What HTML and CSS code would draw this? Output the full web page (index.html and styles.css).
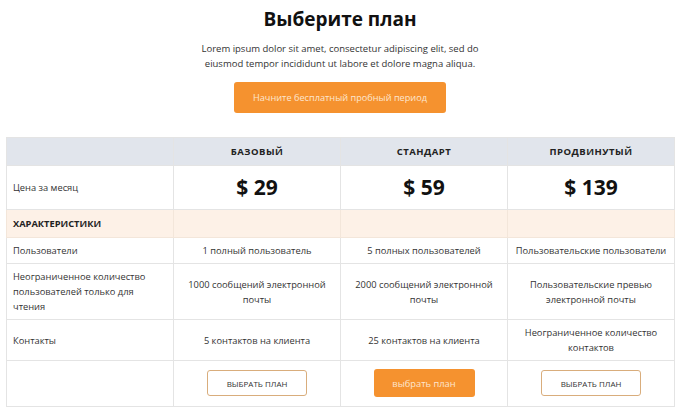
FILE: index.html
```html
<!DOCTYPE html>
<html lang="ru">
<head>
<meta charset="utf-8">
<title>Выберите план</title>
<link rel="stylesheet" href="styles.css">
</head>
<body>
<div class="page">
  <header class="intro">
    <h1 class="title">Выберите план</h1>
    <p class="lead">Lorem ipsum dolor sit amet, consectetur adipiscing elit, sed do<br>eiusmod tempor incididunt ut labore et dolore magna aliqua.</p>
    <a class="cta" href="#">Начните бесплатный пробный период</a>
  </header>
  <table class="plans">
    <colgroup><col class="c"><col class="c"><col class="c"><col class="c"></colgroup>
    <tr class="head">
      <th></th><th>Базовый</th><th>Стандарт</th><th>Продвинутый</th>
    </tr>
    <tr class="price">
      <td class="label">Цена за месяц</td><td>$ 29</td><td>$ 59</td><td>$ 139</td>
    </tr>
    <tr class="section">
      <td class="label">ХАРАКТЕРИСТИКИ</td><td></td><td></td><td></td>
    </tr>
    <tr>
      <td class="label">Пользователи</td><td>1 полный пользователь</td><td>5 полных пользователей</td><td>Пользовательские пользователи</td>
    </tr>
    <tr>
      <td class="label">Неограниченное количество пользователей только для чтения</td><td>1000 сообщений электронной почты</td><td>2000 сообщений электронной почты</td><td>Пользовательские превью электронной почты</td>
    </tr>
    <tr>
      <td class="label">Контакты</td><td>5 контактов на клиента</td><td>25 контактов на клиента</td><td>Неограниченное количество контактов</td>
    </tr>
    <tr class="actions">
      <td></td>
      <td><a class="btn btn-outline" href="#">ВЫБРАТЬ ПЛАН</a></td>
      <td><a class="btn btn-fill" href="#">выбрать план</a></td>
      <td><a class="btn btn-outline" href="#">ВЫБРАТЬ ПЛАН</a></td>
    </tr>
  </table>
</div>
</body>
</html>
```
FILE: styles.css
```css
* { box-sizing: border-box; }
html, body { margin: 0; padding: 0; background: #fff; }
body {
  font-family: "Open Sans", "Liberation Sans", sans-serif;
  color: #333;
}
.page {
  width: 680px;
  padding: 6px 6px 0;
}
.intro {
  display: flex;
  flex-direction: column;
  align-items: center;
}
.title {
  margin: 0;
  font-size: 19px;
  line-height: 26px;
  font-weight: 700;
  color: #111;
}
.lead {
  margin: 9px 0 0;
  font-size: 9.5px;
  line-height: 15px;
  text-align: center;
  color: #333;
}
.cta {
  margin-top: 11px;
  width: 212px;
  height: 31px;
  display: flex;
  align-items: center;
  justify-content: center;
  background: #f5922f;
  border-radius: 3px;
  color: #fde6cf;
  font-size: 9.2px;
  text-decoration: none;
}
.plans {
  margin-top: 24px;
  width: 668px;
  border-collapse: collapse;
  table-layout: fixed;
  font-size: 9.3px;
  line-height: 15px;
  border-bottom: 1px solid #f1e4e4;
}
.plans .c { width: 167px; }
.plans th, .plans td {
  border: 1px solid #e4e4e4;
  padding: 5px 6px;
  text-align: center;
  vertical-align: middle;
  font-weight: 400;
}
.plans .label { text-align: left; }
.head th {
  background: #e1e5ec;
  padding: 6px;
  font-weight: 700;
  font-size: 9.5px;
  letter-spacing: 0.5px;
  text-transform: uppercase;
  color: #222;
}
.price td {
  padding: 8px 6px;
  font-size: 21px;
  line-height: 27px;
  font-weight: 700;
  color: #111;
}
.price td.label {
  font-size: 9.3px;
  font-weight: 400;
  color: #333;
}
.section td {
  background: #fdf1e7;
  padding: 6px;
  border-color: #f3e6da;
}
.section td.label {
  font-weight: 700;
  font-size: 9.3px;
  color: #222;
}
.actions td { padding: 8px 6px 9px; }
.btn {
  display: inline-flex;
  align-items: center;
  justify-content: center;
  width: 100px;
  height: 26px;
  border-radius: 3px;
  font-size: 8px;
  text-decoration: none;
}
.btn-outline {
  border: 1.5px solid #d9ad7c;
  color: #333;
  background: #fff;
}
.btn-fill {
  width: 101px;
  height: 28px;
  background: #f5922f;
  color: #fde6cf;
  font-size: 9.3px;
}
```
